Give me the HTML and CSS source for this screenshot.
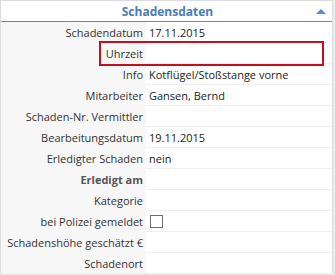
FILE: index.html
```html
<!DOCTYPE html>
<html lang="de">
<head>
<meta charset="utf-8">
<link rel="stylesheet" href="styles.css">
</head>
<body>
<div class="panel">
  <div class="header">
    <span class="title">Schadensdaten</span>
    <svg class="toggle" width="10" height="5" viewBox="0 0 10 5"><polygon points="0,5 10,5 5,0" fill="#5b8ac6"/></svg>
  </div>
  <div class="grid">
    <div class="label">Schadendatum</div><div class="value">17.11.2015</div>
    <div class="label">Uhrzeit</div><div class="value"></div>
    <div class="label">Info</div><div class="value">Kotflügel/Stoßstange vorne</div>
    <div class="label">Mitarbeiter</div><div class="value">Gansen, Bernd</div>
    <div class="label">Schaden-Nr. Vermittler</div><div class="value"></div>
    <div class="label">Bearbeitungsdatum</div><div class="value">19.11.2015</div>
    <div class="label">Erledigter Schaden</div><div class="value">nein</div>
    <div class="label bold">Erledigt am</div><div class="value"></div>
    <div class="label">Kategorie</div><div class="value"></div>
    <div class="label">bei Polizei gemeldet</div><div class="value"><span class="checkbox"></span></div>
    <div class="label">Schadenshöhe geschätzt €</div><div class="value"></div>
    <div class="label">Schadenort</div><div class="value"></div>
  </div>
  <div class="focus"></div>
</div>
</body>
</html>
```
FILE: styles.css
```css
html, body {
  margin: 0;
  padding: 0;
  background: #ededed;
}
body {
  width: 335px;
  height: 275px;
  overflow: hidden;
  font-family: "Open Sans", "Noto Sans", sans-serif;
  font-size: 11px;
}
.panel {
  position: relative;
  width: 333px;
  height: 273px;
  box-sizing: border-box;
  border: 1px solid #dcdcdc;
  border-bottom: none;
  background: #f7f7f7;
  overflow: hidden;
}
.header {
  height: 20px;
  background: #fff;
  border-bottom: 1px solid #5b8ac6;
  display: flex;
  align-items: center;
  justify-content: center;
  position: relative;
}
.title {
  color: #4a7db9;
  font-weight: bold;
  font-size: 12px;
  margin-left: 2px;
}
.toggle {
  position: absolute;
  right: 6px;
  top: 8px;
}
.grid {
  display: grid;
  grid-template-columns: 145px 1fr;
  grid-auto-rows: 21px;
}
.label {
  text-align: right;
  padding-right: 3px;
  padding-top: 1px;
  color: #333;
  line-height: 19px;
  border-bottom: 1px solid #f7f7f7;
  white-space: nowrap;
}
.label.bold {
  font-weight: bold;
  color: #555;
}
.value {
  background: #fff;
  border-bottom: 1px solid #f0f0f0;
  padding-left: 3px;
  padding-top: 1px;
  line-height: 19px;
  color: #222;
  display: flex;
  align-items: center;
}
.checkbox {
  display: inline-block;
  width: 11px;
  height: 11px;
  border: 1px solid #707070;
  background: #fff;
  margin-left: 1px;
}
.focus {
  position: absolute;
  left: 98px;
  top: 40px;
  width: 225px;
  height: 25px;
  box-sizing: border-box;
  border: 2px solid #c50f1f;
}
```
